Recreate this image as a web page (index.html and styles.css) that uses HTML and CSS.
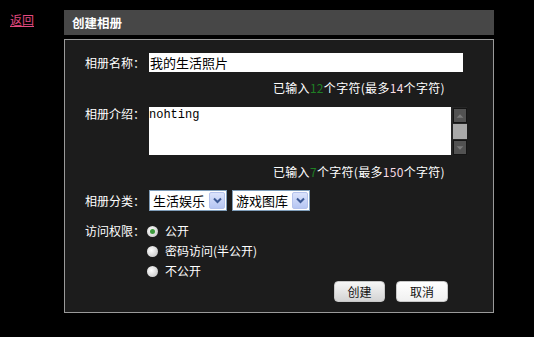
FILE: index.html
```html
<!DOCTYPE html>
<html lang="zh">
<head>
<meta charset="utf-8">
<link rel="stylesheet" href="styles.css">
</head>
<body>
<div class="page">
  <div class="side"><a class="back" href="#">返回</a></div>
  <div class="dialog">
    <div class="title">创建相册</div>
    <div class="panel">
      <div class="row row-name">
        <div class="label">相册名称：</div>
        <div class="input">我的生活照片</div>
      </div>
      <div class="hint hint1">已输入<span class="num-g">12</span>个字符(最多<span class="num-p">14</span>个字符)</div>
      <div class="row row-desc">
        <div class="label">相册介绍：</div>
        <div class="textarea">
          <div class="ta-text">nohting</div>
          <div class="ta-scroll">
            <div class="sb-btn"><svg width="14" height="14" viewBox="0 0 14 14"><path d="M3 9 L7 5 L11 9 Z" fill="#7a7a7a"/></svg></div>
            <div class="sb-thumb"></div>
            <div class="sb-btn"><svg width="14" height="14" viewBox="0 0 14 14"><path d="M3 5 L7 9 L11 5 Z" fill="#7a7a7a"/></svg></div>
          </div>
        </div>
      </div>
      <div class="hint hint2">已输入<span class="num-g">7</span>个字符(最多<span class="num-p">150</span>个字符)</div>
      <div class="row row-cat">
        <div class="label">相册分类：</div>
        <div class="selects">
          <div class="select"><span class="sel-text">生活娱乐</span><span class="sel-btn"><svg width="9" height="7" viewBox="0 0 9 7"><path d="M1 1.5 L4.5 5 L8 1.5" fill="none" stroke="#3d5a96" stroke-width="2"/></svg></span></div>
          <div class="select"><span class="sel-text">游戏图库</span><span class="sel-btn"><svg width="9" height="7" viewBox="0 0 9 7"><path d="M1 1.5 L4.5 5 L8 1.5" fill="none" stroke="#3d5a96" stroke-width="2"/></svg></span></div>
        </div>
      </div>
      <div class="row row-access">
        <div class="label">访问权限：</div>
        <div class="radios">
          <div class="radio-item"><span class="radio checked"></span><span>公开</span></div>
          <div class="radio-item"><span class="radio"></span><span>密码访问(半公开)</span></div>
          <div class="radio-item"><span class="radio"></span><span>不公开</span></div>
        </div>
      </div>
      <div class="buttons">
        <div class="btn btn-create">创建</div>
        <div class="btn btn-cancel">取消</div>
      </div>
    </div>
  </div>
</div>
</body>
</html>
```

FILE: styles.css
```css
html, body {
  margin: 0;
  padding: 0;
  background: #000;
  height: 100%;
}
body {
  font-family: "Noto Sans CJK SC", "Liberation Sans", sans-serif;
  font-size: 12px;
  color: #fff;
}
.page {
  display: flex;
  padding-top: 10px;
}
.side {
  width: 64px;
  flex: none;
  box-sizing: border-box;
  padding-left: 10px;
}
.back {
  display: inline-block;
  color: #e24a80;
  text-decoration: underline;
  font-size: 12px;
  line-height: 18px;
  margin-top: 1px;
}
.dialog {
  width: 430px;
  flex: none;
}
.title {
  height: 25px;
  line-height: 25px;
  background: #474747;
  font-weight: bold;
  font-size: 12.5px;
  padding-left: 8px;
  margin-bottom: 4px;
}
.panel {
  border: 1px solid #9a9a9a;
  background: #1c1c1c;
  height: 274px;
  box-sizing: border-box;
  padding: 13px 0 0 20px;
}
.row {
  display: flex;
}
.label {
  width: 64px;
  flex: none;
  line-height: 18px;
}
.row-name .label {
  line-height: 19px;
}
.input {
  flex: none;
  width: 314px;
  height: 19px;
  background: #fff;
  color: #000;
  font-size: 13px;
  line-height: 19px;
  padding-left: 1px;
  box-sizing: border-box;
}
.hint {
  margin-left: 188px;
  line-height: 16px;
  height: 16px;
  letter-spacing: 0.3px;
}
.hint1 { margin-top: 8px; }
.hint2 { margin-top: 9px; }
.num-g { color: #1f7f24; }
.num-p { color: #f6dbe4; }
.row-desc {
  margin-top: 11px;
}
.row-desc .label {
  line-height: 14px;
}
.textarea {
  flex: none;
  display: flex;
  width: 318px;
  height: 48px;
}
.ta-text {
  flex: none;
  width: 302px;
  background: #fff;
  color: #000;
  font-family: "Liberation Mono", "DejaVu Sans Mono", monospace;
  font-size: 12px;
  line-height: 14px;
  padding-top: 1px;
  box-sizing: border-box;
}
.ta-scroll {
  flex: none;
  width: 16px;
  display: flex;
  flex-direction: column;
  padding: 1px 0 0 2px;
  box-sizing: border-box;
  background: #262626;
}
.sb-btn {
  width: 14px;
  height: 15px;
  box-sizing: border-box;
  background: #525252;
  border: 1px solid #151515;
  display: flex;
  align-items: center;
  justify-content: center;
}
.sb-btn svg { width: 12px; height: 12px; }
.sb-thumb {
  width: 14px;
  height: 15px;
  background: #a9a9a9;
  margin: 1px 0;
}
.row-cat {
  margin-top: 10px;
}
.row-cat .label {
  line-height: 21px;
}
.selects {
  display: flex;
  gap: 5px;
}
.select {
  flex: none;
  display: flex;
  align-items: center;
  justify-content: space-between;
  width: 78px;
  height: 21px;
  box-sizing: border-box;
  border: 1px solid #7f9db9;
  background: #fff;
  color: #000;
  font-size: 13px;
  padding: 1px;
}
.sel-text {
  padding-left: 2px;
  line-height: 17px;
}
.sel-btn {
  width: 16px;
  height: 17px;
  box-sizing: border-box;
  border: 1px solid #b4c2ec;
  border-radius: 2px;
  background: linear-gradient(#dbe3fb, #b6c6f3);
  display: flex;
  align-items: center;
  justify-content: center;
}
.row-access {
  margin-top: 10px;
}
.row-access .label {
  line-height: 20px;
}
.radios {
  display: flex;
  flex-direction: column;
}
.radio-item {
  display: flex;
  align-items: center;
  height: 20px;
  line-height: 20px;
}
.radio {
  width: 11px;
  height: 11px;
  border-radius: 50%;
  box-sizing: border-box;
  background: radial-gradient(circle at 40% 40%, #ffffff, #d0d0d0 70%, #a8a8a8);
  margin: 0 7px 0 -2px;
  display: flex;
  align-items: center;
  justify-content: center;
}
.radio.checked::after {
  content: "";
  width: 5px;
  height: 5px;
  border-radius: 50%;
  background: #3c9b3c;
}
.buttons {
  display: flex;
  justify-content: flex-end;
  gap: 11px;
  margin-right: 45px;
}
.btn {
  width: 51px;
  height: 21px;
  box-sizing: border-box;
  border: 1px solid #c8c8c8;
  border-radius: 4px;
  color: #111;
  font-size: 12px;
  line-height: 19px;
  text-align: center;
}
.btn-create {
  background: linear-gradient(#f6f6f6, #d4d4d4);
}
.btn-cancel {
  width: 52px;
  background: linear-gradient(#ffffff, #f0f0f0);
}
```
